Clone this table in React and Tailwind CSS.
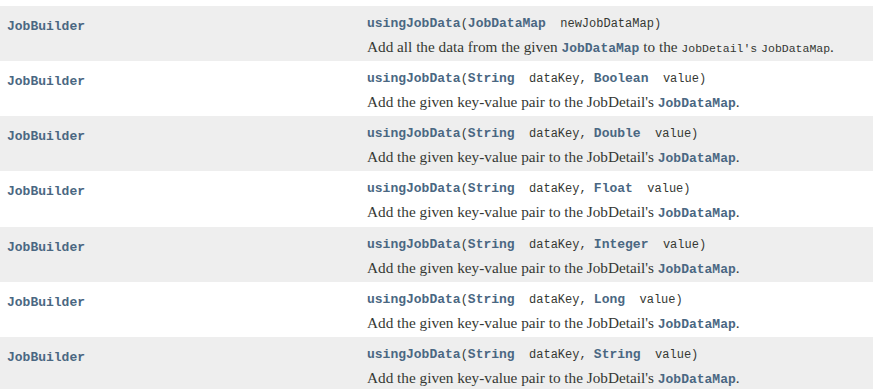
import React from "react";

const mono = "font-['Liberation_Mono',monospace]";
const serif = "font-['Liberation_Serif',serif]";

const rows = [
  { type: "JobDataMap", arg: "newJobDataMap", value: null, h: "h-[55px]" },
  { type: "String", arg: "dataKey,", value: "Boolean", h: "h-[55px]" },
  { type: "String", arg: "dataKey,", value: "Double", h: "h-[55px]" },
  { type: "String", arg: "dataKey,", value: "Float", h: "h-[56px]" },
  { type: "String", arg: "dataKey,", value: "Integer", h: "h-[55px]" },
  { type: "String", arg: "dataKey,", value: "Long", h: "h-[55px]" },
  { type: "String", arg: "dataKey,", value: "String", h: "h-[55px]" },
];

function Code({ children }) {
  return <span className={`${mono} font-bold text-[13px] text-[#4A6782]`}>{children}</span>;
}

function Row({ row, index }) {
  const bg = index % 2 === 0 ? "bg-[#EEEEEE]" : "bg-white";
  return (
    <div className={`${bg} ${row.h} flex mr-[2px]`}>
      <div className="w-[360px] pl-[7px] pt-[8px] leading-[20px]">
        <Code>JobBuilder</Code>
      </div>
      <div className="pl-[7px] pt-[8px]">
        <div className={`${mono} text-[12px] leading-[20px] text-[#353833] whitespace-pre`}>
          <Code>usingJobData</Code>(<Code>{row.type}</Code>{"  "}{row.arg}
          {row.value && (
            <>
              {" "}
              <Code>{row.value}</Code>{"  "}value
            </>
          )}
          )
        </div>
        <div className={`${serif} text-[15.25px] leading-[20px] mt-[3px] text-[#353833]`}>
          {row.value ? (
            <>
              Add the given key-value pair to the JobDetail's <Code>JobDataMap</Code>.
            </>
          ) : (
            <>
              Add all the data from the given <Code>JobDataMap</Code> to the{" "}
              <span className={`${mono} text-[11.5px]`}>JobDetail's</span>{" "}
              <span className={`${mono} text-[11.5px]`}>JobDataMap</span>.
            </>
          )}
        </div>
      </div>
    </div>
  );
}

export default function App() {
  return (
    <div className="w-[875px] h-[389px] overflow-hidden bg-white pt-[6px]">
      {rows.map((row, i) => (
        <Row key={i} row={row} index={i} />
      ))}
    </div>
  );
}
